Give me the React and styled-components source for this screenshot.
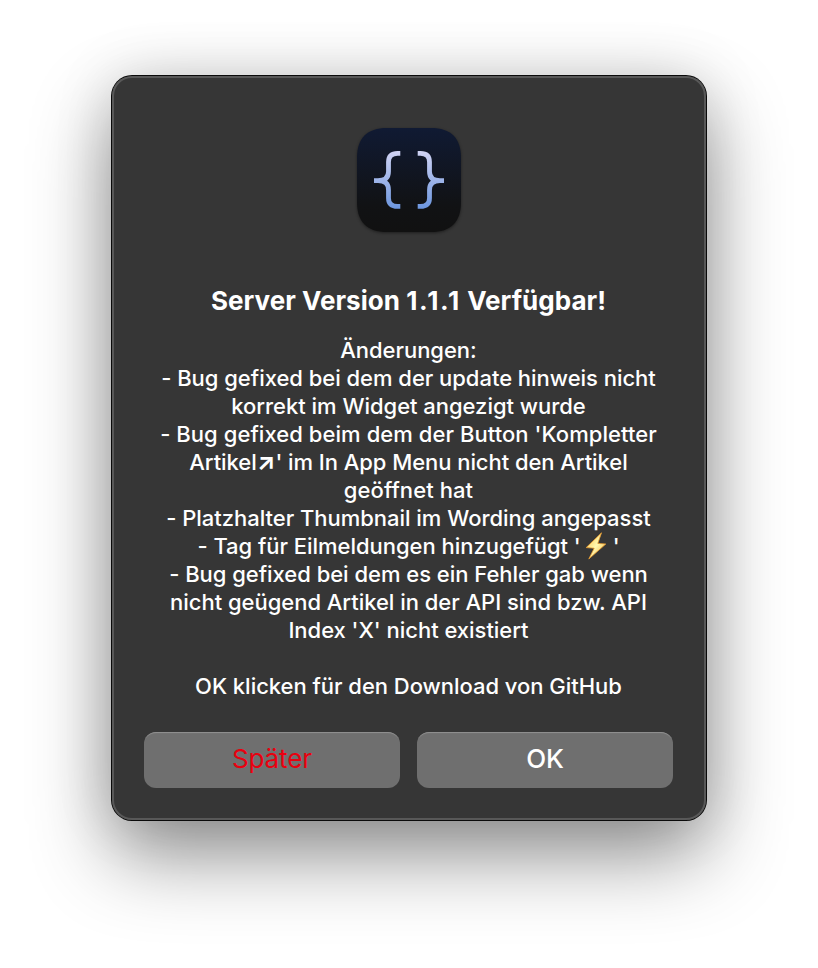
import React from "react";
import styled, { createGlobalStyle } from "styled-components";

const GlobalStyle = createGlobalStyle`
  * { box-sizing: border-box; }
  body { margin: 0; background: #fff; font-family: Inter, "Liberation Sans", sans-serif; }
`;
const Page = styled.main`
  width: 818px; height: 968px; padding: 76px 112px; overflow: hidden;
`;
const Dialog = styled.section`
  width: 594px; height: 744px; padding: 52px 33px 32px 32px; border-radius: 20px;
  background: #363636; color: #fff;
  display: flex; flex-direction: column; align-items: center;
  box-shadow: inset 0 0 0 2px #585858, 0 0 0 1px #0a0a0a, 0 36px 80px rgba(0,0,0,.43), 0 0 60px rgba(0,0,0,.13);
`;
const AppIcon = styled.svg`
  width: 104px; height: 104px; display: block; flex: none; margin-left: 1px;
  filter: drop-shadow(0 1px 1.5px rgba(0,0,0,.45));
`;
const Title = styled.h1`
  margin: 53px 0 0; height: 32px; font-size: 26px; line-height: 32px; font-weight: 750;
  letter-spacing: .04px; white-space: nowrap;
`;
const VersionNumber = styled.span`
  letter-spacing: 1.7px;
`;
const Message = styled.div`
  margin-top: 19px; display: flex; flex-direction: column; align-items: center;
`;
const Line = styled.div`
  height: 28px; line-height: 28px; font-size: 22px; font-weight: 500; white-space: pre;
  letter-spacing: ${p => p.$spacing ?? -.03}px; display: flex; align-items: center;
`;
const Arrow = styled.span`
  font-weight: 700; font-size: 24px;
`;
const Bolt = styled.svg`
  width: 24px; height: 28px; margin: 0 5px 0 3px; display: block;
`;
const Actions = styled.div`
  margin-top: 32px; display: flex; gap: 17px;
`;
const Button = styled.button`
  width: 256px; height: 56px; padding: 0 0 2px; border: 0; border-radius: 12px; background: #6f6f6f;
  box-shadow: inset 0 2px 1px -1px #929292;
  color: ${p => p.$danger ? "#e9000f" : "#fff"};
  font: ${p => p.$danger ? 400 : 500} 26px/52px Inter, sans-serif;
  letter-spacing: -.1px;
`;

const LightningBolt = () => (
  <Bolt viewBox="0 0 24 28">
    <defs>
      <linearGradient id="bolt" x1="0" y1="0" x2="1" y2="1">
        <stop offset="0" stopColor="#f7b83b" /><stop offset=".5" stopColor="#fff9b0" /><stop offset="1" stopColor="#f3a82f" />
      </linearGradient>
    </defs>
    <path d="M17.5 .8 2.2 15.6 10.2 16.2 4.8 27 21.8 12 13.8 11.4Z" fill="url(#bolt)" stroke="#e99b2e" strokeWidth=".8" strokeLinejoin="round" />
  </Bolt>
);

const lines = [
  { text: "Änderungen:" },
  { text: "- Bug gefixed bei dem der update hinweis nicht" },
  { text: "korrekt im Widget angezigt wurde" },
  { text: "- Bug gefixed beim dem der Button 'Kompletter", spacing: 0.06 },
  { text: <>Artikel<Arrow>↗</Arrow>' im In App Menu nicht den Artikel</>, spacing: -0.06 },
  { text: "geöffnet hat", spacing: 0.08 },
  { text: "- Platzhalter Thumbnail im Wording angepasst" },
  { text: <>- Tag für Eilmeldungen hinzugefügt '<LightningBolt />'</> },
  { text: "- Bug gefixed bei dem es ein Fehler gab wenn" },
  { text: "nicht geügend Artikel in der API sind bzw. API" },
  { text: "Index 'X' nicht existiert" },
  { text: "" },
  { text: "OK klicken für den Download von GitHub" },
];

export default function App() {
  return (
    <>
      <GlobalStyle />
      <Page>
        <Dialog>
          <AppIcon viewBox="0 0 104 104">
            <defs>
              <linearGradient id="tile" x1="0" y1="0" x2="0" y2="1">
                <stop offset="0" stopColor="#101a33" /><stop offset=".75" stopColor="#111214" /><stop offset="1" stopColor="#111" />
              </linearGradient>
              <linearGradient id="brace" gradientUnits="userSpaceOnUse" x1="0" y1="23" x2="0" y2="81">
                <stop offset="0" stopColor="#d0d3f3" /><stop offset="1" stopColor="#6c96df" />
              </linearGradient>
            </defs>
            <path d="M30 0H74C94 0 104 10 104 30V74C104 94 94 104 74 104H30C10 104 0 94 0 74V30C0 10 10 0 30 0Z" fill="url(#tile)" />
            <g fill="none" stroke="url(#brace)" strokeWidth="4.8">
              <path d="M43.3 25.4H40.5Q31.5 25.4 31.5 34V43.5Q31.5 52.7 21 52.7H17M21 52.7Q31.5 52.7 31.5 62V70Q31.5 78.4 40.5 78.4H43.3" />
              <path d="M60.7 25.4H63.5Q72.5 25.4 72.5 34V43.5Q72.5 52.7 83 52.7H87M83 52.7Q72.5 52.7 72.5 62V70Q72.5 78.4 63.5 78.4H60.7" />
            </g>
          </AppIcon>
          <Title>Server Version <VersionNumber>1.1.1</VersionNumber> Verfügbar!</Title>
          <Message>{lines.map((line, i) => <Line key={i} $spacing={line.spacing}>{line.text}</Line>)}</Message>
          <Actions><Button $danger>Später</Button><Button>OK</Button></Actions>
        </Dialog>
      </Page>
    </>
  );
}
